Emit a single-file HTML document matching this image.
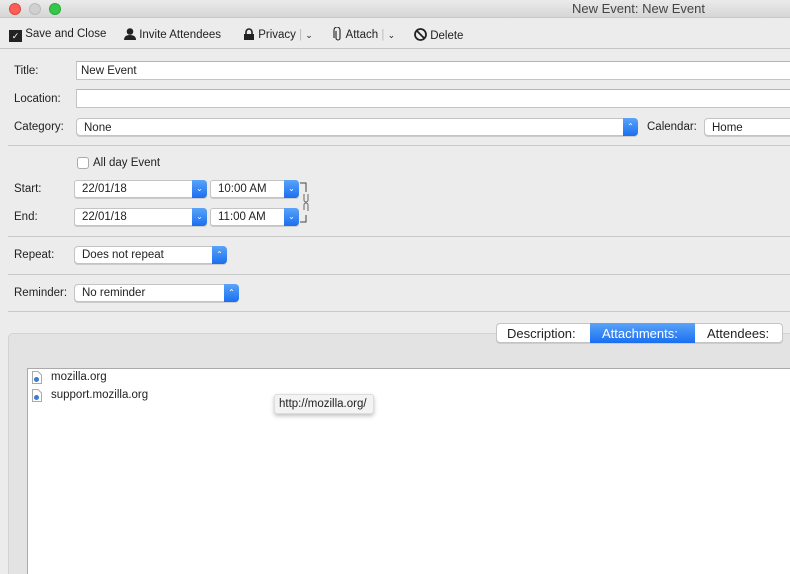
<!DOCTYPE html>
<html style="overflow:hidden;width:790px;height:574px"><head><style>
*{box-sizing:border-box;margin:0;padding:0}
body{width:790px;height:574px;overflow:hidden;background:#ececec;font-family:"Liberation Sans",sans-serif;font-size:11.5px;color:#222;position:relative}
.a{position:absolute}
.tb{left:0;top:0;width:790px;height:18px;background:linear-gradient(#ebebeb,#d6d6d6);border-bottom:1px solid #c8c8c8}
.dot{width:12px;height:12px;border-radius:50%;top:3px}
.inp{background:#fff;border:1px solid #c4c4c4;border-top-color:#b5b5b5;height:19px;padding:3px 0 0 4px}
.sel{background:#fff;border:1px solid #c4c4c4;border-radius:4px;height:18px;padding:2px 0 0 7px;box-shadow:0 1px 0 #ccc}
.btn{position:absolute;right:-1px;top:-1px;width:15px;height:18px;background:linear-gradient(#5aa3f8,#1a6ff0);border-radius:0 4px 4px 0;color:#fff;font-size:8px;text-align:center;line-height:17px}
.hr{height:1px;background:#c9c9c9;left:8px;width:782px}
.lbl{left:14px}
.tbi{top:28px;white-space:nowrap}
</style></head><body>
<div class="a tb"></div>
<div class="a dot" style="left:9px;background:#fc5f57;border:1px solid #de4640"></div>
<div class="a dot" style="left:29px;background:#d0d0d0;border:1px solid #bbb"></div>
<div class="a dot" style="left:49px;background:#34c84a;border:1px solid #27aa35"></div>
<div class="a" style="left:572px;top:1px;font-size:13px;color:#444">New Event: New Event</div>
<div class="a" style="left:0;top:48px;width:790px;height:1px;background:#c4c4c4"></div>
<div class="a tbi" style="left:9px">
<span style="display:inline-block;width:13px;height:12px;background:#222;vertical-align:-2px;color:#fff;font-size:9px;line-height:13px;text-align:center">✓</span> Save and Close</div>
<div class="a tbi" style="left:124px">
<svg width="12" height="12" style="vertical-align:-2px"><circle cx="6" cy="3.5" r="3.3" fill="#222"/><path d="M0 12 Q0 7 6 7 Q12 7 12 12Z" fill="#222"/></svg> Invite Attendees</div>
<div class="a tbi" style="left:243px">
<svg width="12" height="12" style="vertical-align:-2px"><path d="M3 6V4a3 3 0 016 0v2" stroke="#222" stroke-width="1.6" fill="none"/><rect x="1" y="6" width="10" height="6" fill="#222"/></svg> Privacy <span style="color:#bbb">|</span> <span style="font-size:9px">⌄</span></div>
<div class="a tbi" style="left:333px;top:27px">
<svg width="10" height="14" style="vertical-align:-3px"><path d="M3 4v7a2 2 0 004 0V3a3 3 0 00-6 0v8" stroke="#222" stroke-width="1.1" fill="none"/></svg> Attach <span style="color:#bbb">|</span> <span style="font-size:9px">⌄</span></div>
<div class="a tbi" style="left:414px">
<svg width="13" height="13" style="vertical-align:-2px"><circle cx="6.5" cy="6.5" r="5.5" stroke="#222" stroke-width="1.8" fill="none"/><path d="M2.8 2.8L10.2 10.2" stroke="#222" stroke-width="1.8"/></svg> Delete</div>
<div class="a lbl" style="top:65px">Title:</div>
<div class="a inp" style="left:76px;top:61px;width:720px">New Event</div>
<div class="a lbl" style="top:93px">Location:</div>
<div class="a inp" style="left:76px;top:89px;width:720px"></div>
<div class="a lbl" style="top:121px">Category:</div>
<div class="a sel" style="left:76px;top:118px;width:562px;padding-top:3px">None<div class="btn">⌃</div></div>
<div class="a" style="left:647px;top:121px">Calendar:</div>
<div class="a sel" style="left:704px;top:118px;width:96px;padding-top:3px">Home</div>
<div class="a hr" style="top:145px"></div>
<div class="a" style="left:77px;top:157px;width:12px;height:12px;background:#fff;border:1px solid #aaa;border-radius:3px"></div>
<div class="a" style="left:93px;top:157px">All day Event</div>
<div class="a lbl" style="top:183px">Start:</div>
<div class="a sel" style="left:74px;top:180px;width:133px;border-radius:3px">22/01/18<div class="btn">⌄</div></div>
<div class="a sel" style="left:210px;top:180px;width:89px;border-radius:3px">10:00 AM<div class="btn">⌄</div></div>
<div class="a lbl" style="top:211px">End:</div>
<div class="a sel" style="left:74px;top:208px;width:133px;border-radius:3px">22/01/18<div class="btn">⌄</div></div>
<div class="a sel" style="left:210px;top:208px;width:89px;border-radius:3px">11:00 AM<div class="btn">⌄</div></div>
<svg class="a" style="left:297px;top:182px" width="14" height="44"><path d="M3 1H9V10M9 33V40H3" stroke="#444" fill="none"/><path d="M7 12v6a2 2 0 004 0v-6" stroke="#666" fill="none"/><path d="M7 28v-5a2 2 0 014 0v6" stroke="#666" fill="none"/></svg>
<div class="a hr" style="top:236px"></div>
<div class="a lbl" style="top:249px">Repeat:</div>
<div class="a sel" style="left:74px;top:246px;width:153px">Does not repeat<div class="btn">⌃</div></div>
<div class="a hr" style="top:274px"></div>
<div class="a lbl" style="top:287px">Reminder:</div>
<div class="a sel" style="left:74px;top:284px;width:165px">No reminder<div class="btn">⌃</div></div>
<div class="a hr" style="top:311px"></div>
<div class="a" style="left:8px;top:333px;width:800px;height:241px;background:#e3e3e3;border:1px solid #d3d3d3;border-bottom:0;border-radius:5px 5px 0 0"></div>
<div class="a" style="left:496px;top:323px;width:287px;height:20px;background:#fff;border:1px solid #c4c4c4;border-radius:4px;font-size:13px;box-shadow:0 1px 0 #ccc">
<span class="a" style="left:10px;top:2px">Description:</span>
<span class="a" style="left:93px;top:-1px;width:105px;height:20px;background:linear-gradient(#5aa3f8,#1a6ff0);color:#fff;padding:3px 0 0 12px">Attachments:</span>
<span class="a" style="left:210px;top:2px">Attendees:</span></div>
<div class="a" style="left:27px;top:368px;width:770px;height:206px;background:#fff;border:1px solid #aaa;border-right:0;border-bottom:0"></div>
<svg class="a" style="left:32px;top:371px" width="10" height="13"><path d="M.5.5H6L9.5 4V12.5H.5Z" fill="#fff" stroke="#aaa"/><circle cx="4.5" cy="8.5" r="2.5" fill="#3b7bd3"/></svg>
<div class="a" style="left:51px;top:371px">mozilla.org</div>
<svg class="a" style="left:32px;top:389px" width="10" height="13"><path d="M.5.5H6L9.5 4V12.5H.5Z" fill="#fff" stroke="#aaa"/><circle cx="4.5" cy="8.5" r="2.5" fill="#3b7bd3"/></svg>
<div class="a" style="left:51px;top:389px">support.mozilla.org</div>
<div class="a" style="left:274px;top:394px;width:100px;height:20px;background:#f3f3f3;border:1px solid #ddd;border-radius:3px;box-shadow:0 2px 4px rgba(0,0,0,.25);padding:3px 0 0 4px">http://mozilla.org/</div>
</body></html>
